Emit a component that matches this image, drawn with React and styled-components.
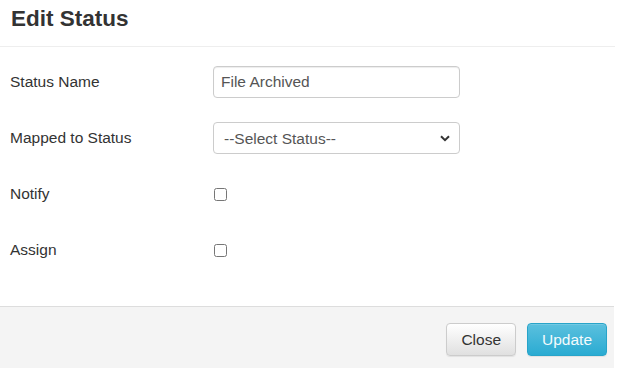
import React from 'react'
import styled, { createGlobalStyle } from 'styled-components'

const Global = createGlobalStyle`
  body {
    margin: 0;
    background: #fff;
    font-family: "Liberation Sans", Arial, sans-serif;
    color: #333;
  }
`

const Modal = styled.div`
  width: 615px;
  background: #fff;
`

const Header = styled.div`
  height: 46px;
  border-bottom: 1px solid #eeeeee;
  display: flex;
  align-items: center;
  padding: 0 11px;
  box-sizing: content-box;
  h4 {
    margin: 0;
    margin-top: -8px;
    font-size: 22.5px;
    font-weight: bold;
    color: #333;
  }
`

const Body = styled.div`
  padding: 19px 10px 40px;
  display: flex;
  flex-direction: column;
  gap: 24px;
`

const Row = styled.div`
  display: grid;
  grid-template-columns: 203px 247px;
  align-items: center;
  height: 32px;
`

const Label = styled.label`
  font-size: 15.5px;
  color: #333;
`

const TextInput = styled.input`
  box-sizing: border-box;
  width: 247px;
  height: 32px;
  padding: 6px 7px;
  font: 15.5px "Liberation Sans", Arial, sans-serif;
  color: #555;
  border: 1px solid #ccc;
  border-radius: 4px;
  box-shadow: inset 0 1px 1px rgba(0, 0, 0, 0.075);
  outline: none;
`

const SelectWrap = styled.div`
  position: relative;
  width: 247px;
  height: 32px;
  svg {
    position: absolute;
    right: 10px;
    top: 13px;
    pointer-events: none;
  }
`

const Select = styled.select`
  appearance: none;
  box-sizing: border-box;
  width: 100%;
  height: 32px;
  padding: 0 10px;
  font: 15.5px "Liberation Sans", Arial, sans-serif;
  color: #555;
  background: #fff;
  border: 1px solid #ccc;
  border-radius: 4px;
  outline: none;
`

const Check = styled.input`
  margin: 0 0 0 1px;
  width: 13px;
  height: 13px;
`

const Footer = styled.div`
  border-top: 1px solid #dddddd;
  background: #f4f4f4;
  height: 62px;
  display: flex;
  justify-content: flex-end;
  align-items: flex-start;
  gap: 11px;
  padding: 16px 7px 0 0;
  box-sizing: border-box;
  width: 614px;
`

const Button = styled.button`
  height: 33px;
  padding: 0 14px;
  font: 15.5px "Liberation Sans", Arial, sans-serif;
  border-radius: 4px;
  cursor: pointer;
  color: ${p => (p.$primary ? '#f4fbfd' : '#333')};
  border: 1px solid ${p => (p.$primary ? '#28a4c9' : '#ccc')};
  background: ${p =>
    p.$primary
      ? 'linear-gradient(#5bc0de, #2aabd2)'
      : 'linear-gradient(#fff, #e0e0e0)'};
  box-shadow: inset 0 1px 0 rgba(255, 255, 255, 0.15), 0 1px 1px rgba(0, 0, 0, 0.075);
`

export default function App() {
  return (
    <Modal>
      <Global />
      <Header>
        <h4>Edit Status</h4>
      </Header>
      <Body>
        <Row>
          <Label>Status Name</Label>
          <TextInput defaultValue="File Archived" />
        </Row>
        <Row>
          <Label>Mapped to Status</Label>
          <SelectWrap>
            <Select defaultValue="">
              <option value="">--Select Status--</option>
            </Select>
            <svg width="10" height="7" viewBox="0 0 10 7">
              <path d="M1 1.2l4 4 4-4" fill="none" stroke="#333" strokeWidth="2" />
            </svg>
          </SelectWrap>
        </Row>
        <Row>
          <Label>Notify</Label>
          <Check type="checkbox" />
        </Row>
        <Row>
          <Label>Assign</Label>
          <Check type="checkbox" />
        </Row>
      </Body>
      <Footer>
        <Button>Close</Button>
        <Button $primary>Update</Button>
      </Footer>
    </Modal>
  )
}
